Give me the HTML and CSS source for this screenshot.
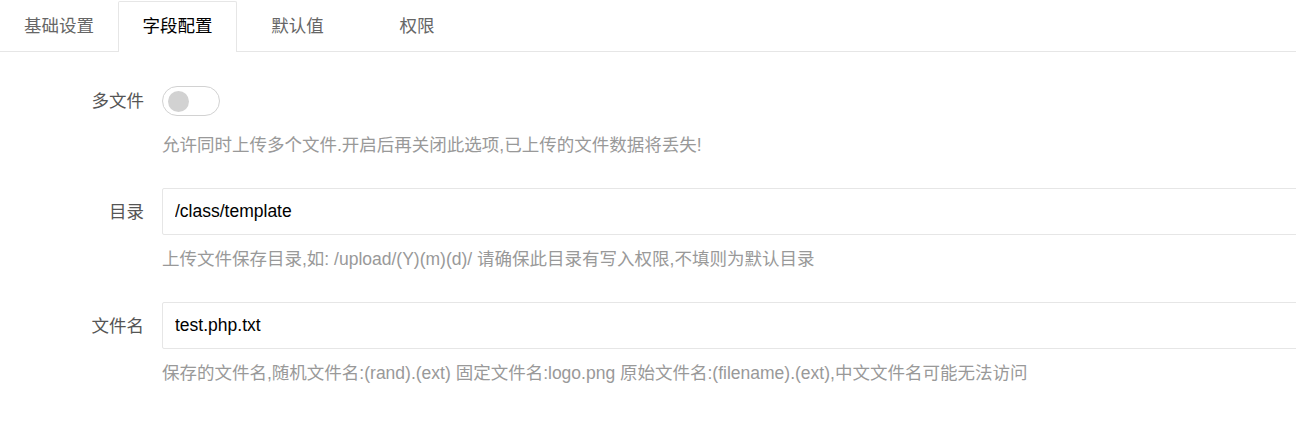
FILE: index.html
```html
<!DOCTYPE html>
<html lang="zh-CN">
<head>
<meta charset="utf-8">
<title>字段配置</title>
<link rel="stylesheet" href="styles.css">
</head>
<body>
<div class="page">
  <ul class="tabs">
    <li class="tab">基础设置</li>
    <li class="tab active">字段配置</li>
    <li class="tab">默认值</li>
    <li class="tab">权限</li>
  </ul>
  <div class="form">
    <div class="row row-switch">
      <label class="label">多文件</label>
      <div class="control">
        <span class="switch"><i class="knob"></i></span>
      </div>
    </div>
    <div class="help help-first">允许同时上传多个文件.开启后再关闭此选项,已上传的文件数据将丢失!</div>

    <div class="row row-input">
      <label class="label">目录</label>
      <div class="control">
        <input class="input" type="text" value="/class/template">
      </div>
    </div>
    <div class="help">上传文件保存目录,如: /upload/(Y)(m)(d)/ 请确保此目录有写入权限,不填则为默认目录</div>

    <div class="row row-input">
      <label class="label">文件名</label>
      <div class="control">
        <input class="input" type="text" value="test.php.txt">
      </div>
    </div>
    <div class="help">保存的文件名,随机文件名:(rand).(ext) 固定文件名:logo.png 原始文件名:(filename).(ext),中文文件名可能无法访问</div>
  </div>
</div>
</body>
</html>
```

FILE: styles.css
```css
html, body {
  margin: 0;
  padding: 0;
  background: #fff;
  overflow: hidden;
}
body {
  font-family: "Liberation Sans", "Noto Sans CJK SC", sans-serif;
  font-size: 17.5px;
  color: #333;
}
.page {
  width: 1296px;
  overflow: hidden;
}
.tabs {
  list-style: none;
  margin: 0;
  padding: 1px 0 0 0;
  display: flex;
  height: 52px;
  box-sizing: border-box;
  border-bottom: 1px solid #e6e6e6;
}
.tab {
  width: 118px;
  height: 50px;
  line-height: 50px;
  text-align: center;
  color: #666;
  box-sizing: border-box;
}
.tab.active {
  width: 119px;
  height: 51px;
  margin-bottom: -1px;
  border: 1px solid #e6e6e6;
  border-bottom: none;
  border-radius: 2px 2px 0 0;
  background: #fff;
  color: #000;
  line-height: 49px;
}
.tab:nth-child(3) { width: 121px; }
.form {
  width: 1500px;
  padding-top: 34px;
}
.row {
  display: flex;
  align-items: center;
}
.label {
  width: 144px;
  text-align: right;
  color: #555;
  line-height: 24px;
  flex: none;
}
.control {
  margin-left: 18px;
  flex: 1;
  display: flex;
  align-items: center;
}
.row-switch {
  height: 30px;
}
.switch {
  position: relative;
  display: block;
  width: 58px;
  height: 30px;
  box-sizing: border-box;
  border: 1px solid #d2d2d2;
  border-radius: 25px;
  background: #fff;
}
.knob {
  position: absolute;
  left: 5px;
  top: 3.5px;
  width: 21px;
  height: 21px;
  border-radius: 50%;
  background: #d2d2d2;
}
.help {
  margin-left: 162px;
  margin-top: 12px;
  line-height: 24px;
  color: #999;
  white-space: nowrap;
}
.help-first {
  margin-top: 17px;
}
.row-input {
  margin-top: 31px;
}
.input {
  display: block;
  width: 100%;
  height: 47px;
  box-sizing: border-box;
  border: 1px solid #e6e6e6;
  border-radius: 2px;
  padding: 0 0 0 12px;
  margin: 0;
  font-family: "Liberation Sans", "Noto Sans CJK SC", sans-serif;
  font-size: 17.5px;
  color: #000;
  background: #fff;
  outline: none;
}
```
